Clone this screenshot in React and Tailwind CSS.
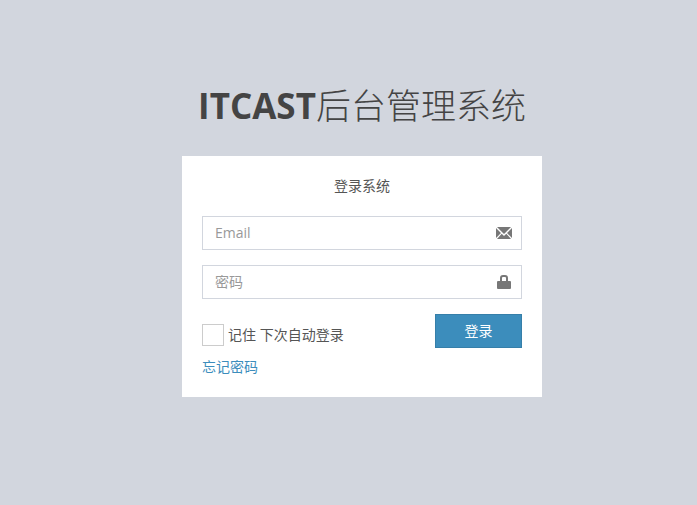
const sans = "font-['Open_Sans','Noto_Sans_CJK_SC',sans-serif]";

function Field({ placeholder, children }) {
  return (
    <div className="mb-[15px] flex h-[34px] items-center justify-between border border-[#d2d6de] bg-white pl-3 pr-[9px] text-sm text-[#999]">
      <span>{placeholder}</span>
      {children}
    </div>
  );
}

export default function App() {
  return (
    <div className={`h-[505px] overflow-hidden bg-[#d2d6de] pl-[182px] pt-[80px] text-sm leading-5 text-[#555] ${sans}`}>
      <h1 className="mb-[25px] flex h-[51px] w-[360px] items-center justify-center whitespace-nowrap text-[35px] text-[#444]">
        <b className="font-bold">ITCAST</b>
        <span className="font-light">后台管理系统</span>
      </h1>
      <main className="h-[241px] w-[360px] bg-white px-5 pt-5">
        <p className="mb-5 text-center">登录系统</p>
        <Field placeholder="Email">
          <svg width="16" height="14" viewBox="0 0 16 14" fill="#777">
            <path d="M1 1h14L8 8zM0 2l5 5-5 5zM16 2v10l-5-5zM5.7 7.7 8 10l2.300-2.300L15 13H1z" />
          </svg>
        </Field>
        <Field placeholder="密码">
          <svg width="16" height="16" viewBox="0 0 16 16" fill="#777">
            <path fillRule="evenodd" d="M4 7V4q0-3 3-3h2q3 0 3 3v3h2q1 0 1 1v6q0 1-1 1H2q-1 0-1-1V8q0-1 1-1zM6 7h4V4q0-1-1-1H7Q6 3 6 4z" />
          </svg>
        </Field>
        <div className="flex h-[34px] items-start justify-between">
          <label className="flex items-center pt-[10px]">
            <span className="mr-1 h-[22px] w-[22px] border border-[#ccc]" />
            <span>记住 下次自动登录</span>
          </label>
          <button className="h-[34px] w-[87px] border border-[#367fa9] bg-[#3c8dbc] text-white">登录</button>
        </div>
        <a className="mt-[9px] block text-[#3c8dbc]">忘记密码</a>
      </main>
    </div>
  );
}
